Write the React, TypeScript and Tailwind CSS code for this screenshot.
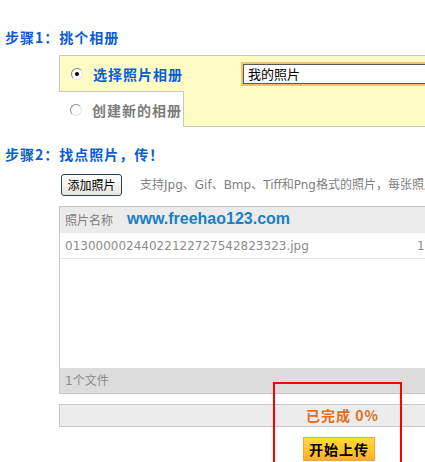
import React from 'react'

const cjk = { fontFamily: '"Noto Sans CJK SC", "DejaVu Sans", sans-serif' }
const mixed = { fontFamily: '"DejaVu Sans", "Noto Sans CJK SC", sans-serif' }

function Radio({ checked }: { checked?: boolean }) {
  return (
    <span className="inline-flex w-[12px] h-[12px] rounded-full border border-[#8a8a8a] border-b-[#e2e2e2] border-r-[#e2e2e2] bg-white items-center justify-center shrink-0">
      {checked && <span className="w-[4px] h-[4px] rounded-full bg-black" />}
    </span>
  )
}

export default function App() {
  return (
    <div className="relative w-[425px] h-[462px] overflow-hidden bg-white" style={cjk}>
      <div className="w-[520px] pl-[5px] pt-[29px]">
        {/* 步骤1 */}
        <h2 className="text-[14px] leading-[16px] font-bold tracking-[1px] text-[#0a5cd6]">步骤1：挑个相册</h2>

        <div className="mt-[10px] ml-[54px] flex">
          <div className="w-[125px] shrink-0 flex flex-col">
            <div className="h-[37px] bg-[#fcfcc4] border-t border-l border-b border-[#c8c8c8] flex items-center pl-[11px] gap-[10px] whitespace-nowrap">
              <Radio checked />
              <span className="text-[14px] leading-[16px] font-bold tracking-[1px] text-[#0a5cd6]">选择照片相册</span>
            </div>
            <div className="h-[35px] bg-white border-r border-[#c8c8c8] flex items-center pl-[11px] gap-[10px] whitespace-nowrap">
              <Radio />
              <span className="text-[14px] leading-[16px] font-bold tracking-[1px] text-[#7c7c7c]">创建新的相册</span>
            </div>
          </div>
          <div className="flex-1 h-[72px] bg-[#fcfcc4] border-t border-b border-[#c8c8c8] pl-[59px] pt-[8px]">
            <div className="h-[20px] w-[300px] bg-white border border-[#555] outline-2 outline-[#f2c466] flex items-center pl-[4px] text-[13px] text-black">
              我的照片
            </div>
          </div>
        </div>

        {/* 步骤2 */}
        <h2 className="mt-[19px] text-[14px] leading-[16px] font-bold tracking-[1px] text-[#0a5cd6]">步骤2：找点照片，传！</h2>

        <div className="mt-[12px] ml-[56px] flex items-center">
          <button className="w-[61px] h-[22px] rounded-[3px] border border-[#2a4460] bg-gradient-to-b from-white to-[#e6e4da] text-[12px] text-black leading-none">
            添加照片
          </button>
          <span className="ml-[18px] text-[12px] text-[#808080] whitespace-nowrap" style={mixed}>
            支持Jpg、Gif、Bmp、Tiff和Png格式的照片，每张照片不超过5M
          </span>
        </div>

        {/* 列表 */}
        <div className="relative mt-[10px] ml-[54px] border-l border-t border-b border-[#c8c8c8]">
          <div className="h-[26px] bg-[#ebebeb] flex items-center pl-[5px] text-[12px] text-[#808080]">照片名称</div>
          <div className="h-[26px] border-b border-[#e4e4e4] flex items-center pl-[5px] text-[12px] text-[#8c8c8c]" style={mixed}>
            <span className="w-[352px] shrink-0">01300000244022122727542823323.jpg</span>
            <span>1.2M</span>
          </div>
          <div className="h-[109px] bg-white" />
          <div className="h-[25px] bg-[#dcdcdc] flex items-center pl-[5px] text-[12px] text-[#8c8c8c]" style={mixed}>1个文件</div>
          <span
            className="absolute left-[67px] top-[0px] text-[16px] font-bold text-[#1a7fc2]"
            style={{ fontFamily: '"Liberation Sans", Arial, sans-serif' }}
          >
            www.freehao123.com
          </span>
        </div>

        <div className="mt-[10px] ml-[54px] h-[23px] bg-[#ececec] border-t border-b border-l border-[#c8c8c8] flex items-center pl-[246px]">
          <span className="text-[14px] font-bold tracking-[1px] text-[#e0701e]">已完成 0%</span>
        </div>

        <div className="mt-[9px] ml-[298px]">
          <button className="w-[72px] h-[24px] border border-[#f0a640] bg-gradient-to-b from-[#ffdc34] to-[#ffb020] text-[14px] font-bold tracking-[1px] text-black leading-none">
            开始上传
          </button>
        </div>
      </div>

      <div className="absolute left-[273px] top-[382px] w-[129px] h-[100px] border-2 border-[#ff0000]" />
    </div>
  )
}
